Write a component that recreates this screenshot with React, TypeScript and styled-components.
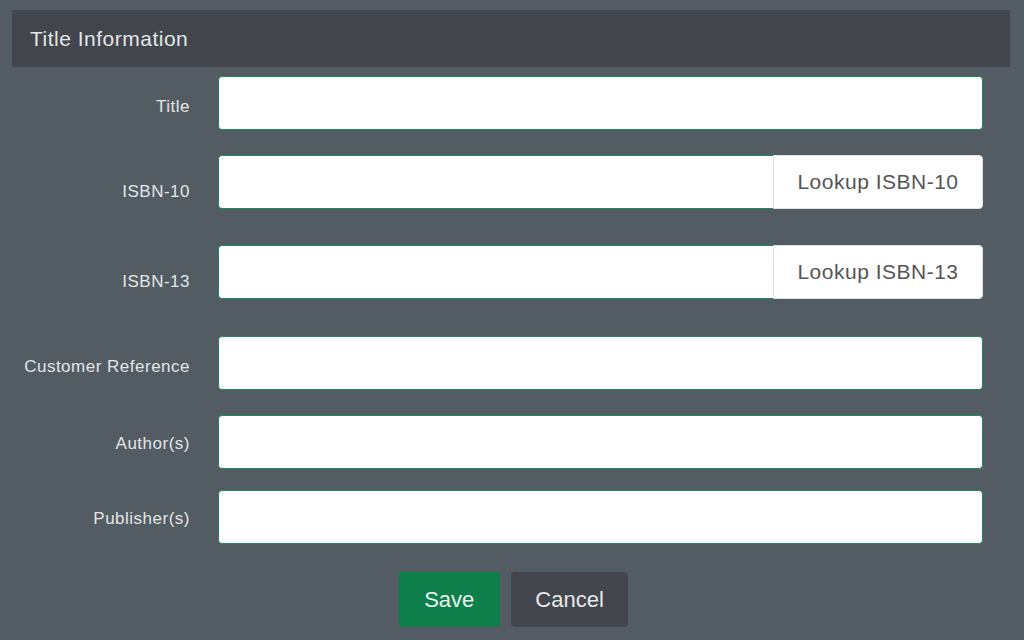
import React from 'react';
import styled, { createGlobalStyle } from 'styled-components';

const GlobalStyle = createGlobalStyle`
  html, body {
    margin: 0;
    padding: 0;
    background: #535c63;
    font-family: "Liberation Sans", Arial, sans-serif;
  }
`;

const Page = styled.div`
  width: 1024px;
  height: 640px;
  box-sizing: border-box;
  padding: 10px 14px 0 12px;
  background: #535c63;
  overflow: hidden;
`;

const Header = styled.div`
  height: 57px;
  background: #42464c;
  display: flex;
  align-items: center;
  padding-left: 18px;
  color: #e4e6e8;
  font-size: 21px;
  letter-spacing: 0.5px;
`;

const Form = styled.div`
  display: flex;
  flex-direction: column;
  padding-right: 28px;
`;

const Row = styled.div<{ $mt: number }>`
  display: flex;
  align-items: center;
  margin-top: ${({ $mt }) => $mt}px;
`;

const Label = styled.label<{ $shift?: number }>`
  width: 178px;
  flex: none;
  text-align: right;
  color: #e3e5e7;
  font-size: 17px;
  letter-spacing: 0.5px;
  white-space: nowrap;
  margin-right: 29px;
  position: relative;
  top: ${({ $shift }) => $shift ?? 2}px;
`;

const InputGroup = styled.div`
  flex: 1;
  display: flex;
  height: 54px;
  margin-left: -1px;
  margin-right: -1px;
`;

const Input = styled.input<{ $joined?: boolean }>`
  flex: 1;
  min-width: 0;
  box-sizing: border-box;
  height: 54px;
  border: 1px solid #1d8a5c;
  border-right: ${({ $joined }) => ($joined ? 'none' : '1px solid #1d8a5c')};
  border-radius: ${({ $joined }) => ($joined ? '4px 0 0 4px' : '4px')};
  background: #fff;
  outline: none;
`;

const LookupButton = styled.button`
  width: 210px;
  flex: none;
  box-sizing: border-box;
  height: 54px;
  border: 1px solid #e2e2e2;
  border-radius: 0 4px 4px 0;
  background: #fff;
  color: #555;
  font-family: inherit;
  font-size: 21px;
  letter-spacing: 0.5px;
  padding: 0;
`;

const Actions = styled.div`
  display: flex;
  justify-content: center;
  gap: 11px;
  margin-top: 28px;
  padding-left: 33px;
`;

const Button = styled.button<{ $variant: 'save' | 'cancel' }>`
  height: 55px;
  border: none;
  border-radius: 4px;
  font-family: inherit;
  font-size: 22px;
  padding: 0 ${({ $variant }) => ($variant === 'save' ? '25.5px' : '24.5px')};
  background: ${({ $variant }) => ($variant === 'save' ? '#0e7f4b' : '#43474d')};
  color: ${({ $variant }) => ($variant === 'save' ? '#e6f3ec' : '#e8e9ea')};
`;

const fields = [
  { label: 'Title', mt: 9, shift: 4 },
  { label: 'ISBN-10', mt: 25, lookup: 'Lookup ISBN-10', shift: 10 },
  { label: 'ISBN-13', mt: 36, lookup: 'Lookup ISBN-13', shift: 10 },
  { label: 'Customer Reference', mt: 37, shift: 4 },
  { label: 'Author(s)', mt: 25, shift: 2 },
  { label: 'Publisher(s)', mt: 21, shift: 2 },
];

export default function App() {
  return (
    <Page>
      <GlobalStyle />
      <Header>Title Information</Header>
      <Form>
        {fields.map((f) => (
          <Row key={f.label} $mt={f.mt}>
            <Label $shift={f.shift}>{f.label}</Label>
            <InputGroup>
              <Input $joined={!!f.lookup} />
              {f.lookup && <LookupButton>{f.lookup}</LookupButton>}
            </InputGroup>
          </Row>
        ))}
        <Actions>
          <Button $variant="save">Save</Button>
          <Button $variant="cancel">Cancel</Button>
        </Actions>
      </Form>
    </Page>
  );
}
